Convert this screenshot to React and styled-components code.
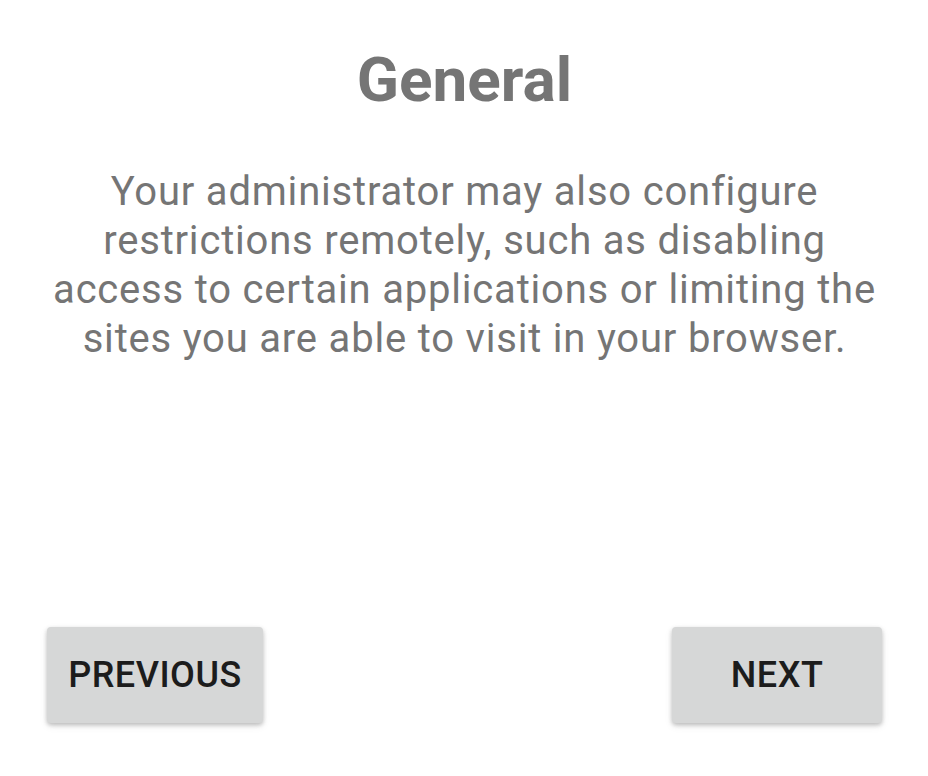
import React from "react";
import styled, { createGlobalStyle } from "styled-components";

const Global = createGlobalStyle`
  html, body { margin: 0; padding: 0; background: #ffffff; }
  body { font-family: Roboto, "Noto Sans", sans-serif; }
`;

const Screen = styled.div`
  width: 928px;
  height: 776px;
  box-sizing: border-box;
  display: flex;
  flex-direction: column;
  align-items: center;
  padding: 44px 46px 53px 47px;
`;

const Title = styled.h1`
  margin: 0;
  font-family: Roboto, sans-serif;
  font-weight: 700;
  font-size: 62px;
  line-height: 72px;
  color: #757575;
  text-align: center;
`;

const Body = styled.p`
  margin: 51px 0 0;
  width: 836px;
  font-family: Roboto, sans-serif;
  font-weight: 400;
  font-size: 40px;
  letter-spacing: 0.8px;
  line-height: 49px;
  color: #757575;
  text-align: center;
`;

const Spacer = styled.div`
  flex: 1;
`;

const Actions = styled.div`
  width: 100%;
  display: flex;
  justify-content: space-between;
  align-items: center;
`;

const Button = styled.button`
  width: ${(p) => p.$w}px;
  height: 96px;
  border: none;
  border-radius: 4px;
  background: #d6d7d7;
  box-shadow: 0 2px 4px rgba(0, 0, 0, 0.22), 0 3px 8px rgba(0, 0, 0, 0.08);
  font-family: "Roboto Medium", Roboto, sans-serif;
  font-weight: 500;
  font-size: 36px;
  letter-spacing: 0.5px;
  color: #1c1c1c;
  text-transform: uppercase;
  padding: 0;
  cursor: pointer;
`;

export default function App() {
  return (
    <>
      <Global />
      <Screen>
        <Title>General</Title>
        <Body>
          Your administrator may also configure restrictions remotely, such as
          disabling access to certain applications or limiting the sites you
          are able to visit in your browser.
        </Body>
        <Spacer />
        <Actions>
          <Button $w={216}>Previous</Button>
          <Button $w={210}>Next</Button>
        </Actions>
      </Screen>
    </>
  );
}
